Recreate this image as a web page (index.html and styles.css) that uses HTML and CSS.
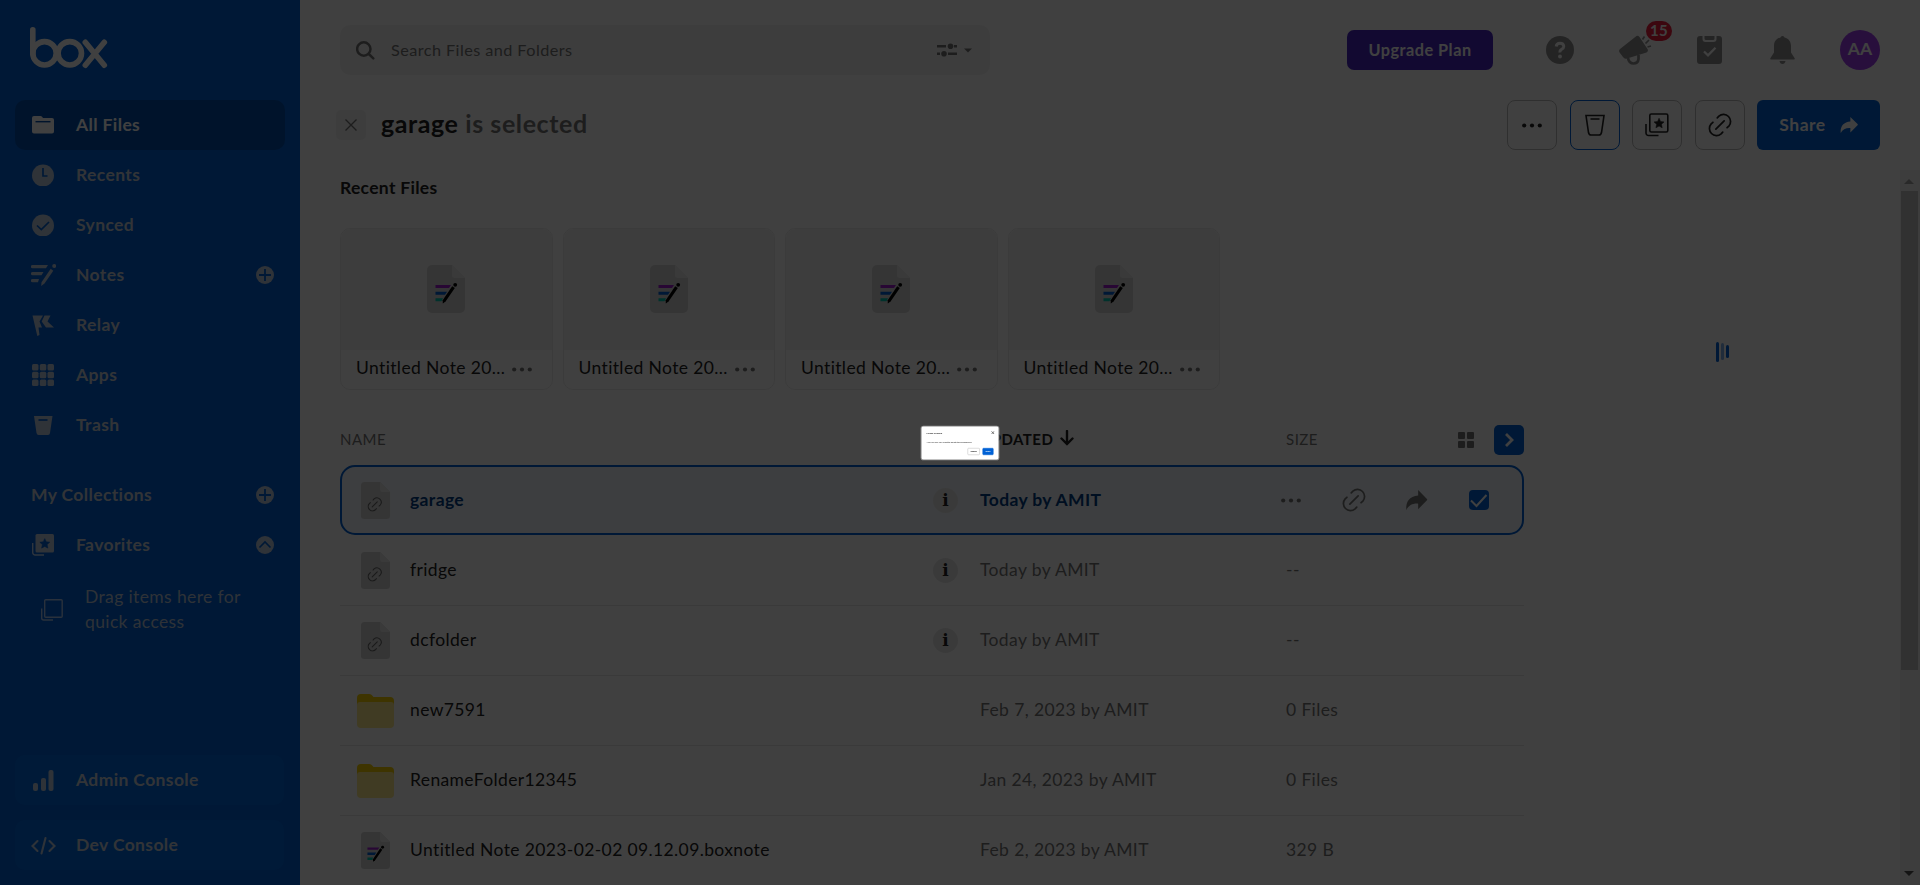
FILE: index.html
```html
<!DOCTYPE html>
<html lang="en">
<head>
<meta charset="utf-8">
<title>All Files | Box</title>
<link rel="stylesheet" href="styles.css">
</head>
<body>
<svg class="defs" width="0" height="0">
  <symbol id="dots" viewBox="0 0 20 5"><circle cx="2.2" cy="2.5" r="2.1"/><circle cx="10" cy="2.5" r="2.1"/><circle cx="17.8" cy="2.5" r="2.1"/></symbol>
  <symbol id="link" viewBox="0 0 22 22"><g fill="none" stroke="currentColor" stroke-width="1.6" stroke-linecap="round"><path d="M8.500 4.500 10 2.900A6.450 6.450 0 0 1 19.100 12L17.500 13.500M4.500 8.500 2.900 10A6.450 6.450 0 0 0 12 19.100L13.500 17.500M7.200 14.800 14.800 7.200"/></g></symbol>
  <symbol id="share" viewBox="0 0 20 20"><path d="M11.500 1 19.500 9a1 1 0 0 1 0 1.300L11.500 18.300V13.300C6.500 13 3 14.800.800 19 0 12 3.500 6.500 11.500 6Z"/></symbol>
  <symbol id="plus" viewBox="0 0 18 18"><circle cx="9" cy="9" r="9"/><path d="M9 3v12M3 9h12" stroke="#0061d5" stroke-width="1.8"/></symbol>
  <symbol id="doc" viewBox="0 0 38 48"><path d="M5 0H25L38 13V43a5 5 0 0 1-5 5H5a5 5 0 0 1-5-5V5A5 5 0 0 1 5 0Z" fill="#d3d3d3"/><path d="M25 0 38 13H28a3 3 0 0 1-3-3Z" fill="#e8e8e8"/></symbol>
  <symbol id="note" viewBox="0 0 38 48"><use href="#doc"/><path d="M8.500 20H24l-2 3H8.500Z" fill="#9f1fcf"/><path d="M8.500 26.700H20l-2 3H8.500Z" fill="#0061d5"/><path d="M8.500 33.200H16l-1.500 3H8.500Z" fill="#00c5b0"/><path d="M25.200 21.200 27.800 23 18.500 36.500 15.800 38.500 15.700 35.200Z"/><circle cx="28.200" cy="19.800" r="1.900"/></symbol>
  <symbol id="weblink" viewBox="0 0 38 48"><use href="#doc"/><use href="#link" x="8.500" y="19.500" width="19" height="19"/></symbol>
  <symbol id="folder" viewBox="0 0 37 34"><path d="M4 0H12C14 0 15 1 16.500 3H33a4 4 0 0 1 4 4V15H0V4A4 4 0 0 1 4 0Z" fill="#f5d000"/><path d="M3 8H34a3 3 0 0 1 3 3V30a4 4 0 0 1-4 4H4a4 4 0 0 1-4-4V11A3 3 0 0 1 3 8Z" fill="#ffe98a"/></symbol>
  <symbol id="star" viewBox="0 0 10 10"><path d="M5 .2 6.400 3.300 9.800 3.700 7.300 6 8 9.400 5 7.700 2 9.400 2.700 6 .2 3.700 3.600 3.300Z" stroke="currentColor" stroke-width=".5" stroke-linejoin="round"/></symbol>
</svg>

<div class="app">
  <aside class="sidebar">
    <svg class="logo" viewBox="30 27 78 42"><g fill="none" stroke="#fff" stroke-width="5.600" stroke-linecap="round"><path d="M32.800 29.800V53.300"/><circle cx="44.500" cy="53.300" r="11.700"/><circle cx="69.800" cy="53.300" r="11.700"/><path d="M85.300 42.300 104.300 65.200M104.300 42.300 85.300 65.200"/></g></svg>
    <nav class="nav">
      <a class="item active"><svg class="ico" viewBox="0 0 22 22"><path d="M2 2H8.500Q10 2 11 4H20a2 2 0 0 1 2 2V17.500a2 2 0 0 1-2 2H2a2 2 0 0 1-2-2V4A2 2 0 0 1 2 2Z"/><path d="M3.500 7.700H18.500" stroke="#004eac" stroke-width="1.400"/></svg><span class="label">All Files</span></a>
      <a class="item"><svg class="ico" viewBox="0 0 22 22"><circle cx="11" cy="11.500" r="11"/><path d="M11 4V12H15.500" fill="none" stroke="#0061d5" stroke-width="1.700"/></svg><span class="label">Recents</span></a>
      <a class="item"><svg class="ico" viewBox="0 0 22 22"><circle cx="11" cy="11.500" r="11"/><path d="M5 11.500 9.300 15.500 17 8" fill="none" stroke="#0061d5" stroke-width="1.700"/></svg><span class="label">Synced</span></a>
      <a class="item"><svg class="ico wide" viewBox="0 0 25 22"><path d="M1.500 1H17L15 4.300H1.500a1.600 1.600 0 0 1 0-3.300ZM1.500 8H12.500L10.500 11.200H1.500a1.600 1.600 0 0 1 0-3.200ZM1.500 15H8L7 18.300H1.500a1.600 1.600 0 0 1 0-3.300ZM19.700 4.800 22.300 6.800 13.500 19.500 10.200 22 10.500 18.200Z"/><circle cx="23.200" cy="2" r="2"/></svg><span class="label">Notes</span><svg class="end"><use href="#plus"/></svg></a>
      <a class="item"><svg class="ico" viewBox="0 0 22 22"><path d="M.500 1.500H11L7.500 7.500 10 13.500H6.500L7.500 21 5.300 22Z"/><path d="M12.500 1.500H18.500L15.500 7.500 22 13.500H14L9.700 7.500Z"/></svg><span class="label">Relay</span></a>
      <a class="item"><svg class="ico" viewBox="0 0 22 22"><g><rect width="6.500" height="6.500" rx="1.500"/><rect x="7.800" width="6.500" height="6.500" rx="1.500"/><rect x="15.500" width="6.500" height="6.500" rx="1.500"/><rect y="7.800" width="6.500" height="6.500" rx="1.500"/><rect x="7.800" y="7.800" width="6.500" height="6.500" rx="1.500"/><rect x="15.500" y="7.800" width="6.500" height="6.500" rx="1.500"/><rect y="15.500" width="6.500" height="6.500" rx="1.500"/><rect x="7.800" y="15.500" width="6.500" height="6.500" rx="1.500"/><rect x="15.500" y="15.500" width="6.500" height="6.500" rx="1.500"/></g></svg><span class="label">Apps</span></a>
      <a class="item"><svg class="ico" viewBox="0 0 22 22"><path d="M2 2H20.500L18 19Q17.800 21 16 21H6.500Q5 21 4.500 19Z"/><path d="M6.500 6H15.500" stroke="#0061d5" stroke-width="1.700"/></svg><span class="label">Trash</span></a>
    </nav>
    <div class="collections">
      <div class="item heading"><span class="label">My Collections</span><svg class="end"><use href="#plus"/></svg></div>
      <div class="item"><svg class="ico" viewBox="0 0 22 22"><rect x="3.500" width="18.500" height="18.500" rx="1.500"/><path d="M.700 9V18.500a2.500 2.500 0 0 0 2.500 2.500H12" fill="none" stroke="#bcd3f2" stroke-width="1.400"/><use href="#star" x="7.500" y="4.300" width="10.500" height="10.500" class="bluestar"/></svg><span class="label">Favorites</span><svg class="end" viewBox="0 0 18 18"><circle cx="9" cy="9" r="9"/><path d="M3.500 11.500 9 6 14.500 11.500" fill="none" stroke="#0061d5" stroke-width="1.600"/></svg></div>
      <div class="drag"><svg class="ico" viewBox="0 0 22 22"><g fill="none" stroke="#a6c4ed" stroke-width="1.400"><rect x="3.700" y=".700" width="17.500" height="17.500" rx="1"/><path d="M.700 9.500V19a2 2 0 0 0 2 2H12"/></g></svg><span>Drag items here for<br>quick access</span></div>
    </div>
    <div class="consoles">
      <a class="item box"><svg class="ico" viewBox="0 0 22 22"><rect x="1" y="14" width="5" height="8" rx="2"/><rect x="9" y="9" width="5" height="13" rx="2"/><rect x="16.500" y="1" width="5" height="21" rx="2"/></svg><span class="label">Admin Console</span></a>
      <a class="item box"><svg class="ico wide" viewBox="0 0 25 22"><g fill="none" stroke="#bcc9dd" stroke-width="2.100" stroke-linecap="round"><path d="M6.500 7 1.500 12 6.500 17M18.500 7 23.500 12 18.500 17M14.500 4 10.500 19.500"/></g></svg><span class="label">Dev Console</span></a>
    </div>
  </aside>

  <main class="main">
    <header class="topbar">
      <div class="search">
        <svg class="glass" viewBox="0 0 19 19"><g fill="none" stroke="#767676" stroke-width="2.500" stroke-linecap="round"><circle cx="7.800" cy="8" r="6.700"/><path d="M12.800 13 17.300 17.300"/></g></svg>
        <span class="label">Search Files and Folders</span>
        <svg class="sliders" viewBox="0 0 35 14"><path d="M0 3.200H9M17 3.200H20M0 10.800H3M11 10.800H20" stroke="#767676" stroke-width="2.600"/><circle cx="13.500" cy="3.200" r="2.800"/><circle cx="7" cy="10.800" r="2.800"/><path d="M27 5.500H35L31 9.500Z"/></svg>
      </div>
      <button class="upgrade">Upgrade Plan</button>
      <div class="tools">
        <svg class="t28" viewBox="0 0 28 28"><circle cx="14" cy="14" r="14"/><path d="M10.200 10.500Q10.500 7.200 14 7.200T17.800 10.300Q17.800 12 15.700 13.300T14 16.500" fill="none" stroke="#fff" stroke-width="2.900"/><circle cx="14" cy="20.500" r="1.900" fill="#fff"/></svg>
        <span class="mega"><svg viewBox="0 0 34 30"><path d="M17.500 1Q19 0 20.500 2L28.500 14Q29.800 16.500 27.500 17.500L8 23.500Q5.500 24.300 4 22L.600 17.500Q-.600 15.500 1 14Z"/><path d="M9 23Q10 28.500 14.500 28.500T19.500 24V20" fill="none" stroke="#909090" stroke-width="2.700"/><path d="M23.500 4.500 25.500 1.500M26.500 8.500 30 5M28.500 12 32 11" stroke="#909090" stroke-width="1.700"/></svg><b class="badge">15</b></span>
        <svg class="clip" viewBox="0 0 25 28"><path d="M3 0H5.500V3a3 3 0 0 0 3 3H16.500a3 3 0 0 0 3-3V0H22a3 3 0 0 1 3 3V25a3 3 0 0 1-3 3H3a3 3 0 0 1-3-3V3A3 3 0 0 1 3 0ZM7.500 0H17.500V2.500A1.500 1.500 0 0 1 16 4H9A1.500 1.500 0 0 1 7.500 2.500Z"/><path d="M7 15.500 11 19.300 18.500 11.700" fill="none" stroke="#fff" stroke-width="2.300"/></svg>
        <svg class="bell" viewBox="0 0 25 28"><path d="M12.500 0a2 2 0 0 1 2 1.500C19 2.500 21 6 21 10V16.500L24.500 22a.9.900 0 0 1-.7 1.500H1.200A.9.900 0 0 1 .5 22L4 16.500V10C4 6 6 2.500 10.500 1.500a2 2 0 0 1 2-1.500ZM9.500 25H15.500Q15 28 12.500 28T9.500 25Z"/></svg>
        <span class="avatar">AA</span>
      </div>
    </header>

    <div class="selection">
      <span class="close"><svg viewBox="0 0 12 12"><path d="M.500.500 11.500 11.500M11.500.500.500 11.500" stroke="#767676" stroke-width="1.400"/></svg></span>
      <h1>garage <span>is selected</span></h1>
      <div class="actions">
        <span class="btn"><svg class="d"><use href="#dots"/></svg></span>
        <span class="btn focus"><svg viewBox="0 0 22 22"><path d="M2 1.500H20L17.500 18.500Q17 21 15 21H7Q5 21 4.500 18.500ZM6.500 5H15.500" fill="none" stroke="#222" stroke-width="1.600"/></svg></span>
        <span class="btn"><svg viewBox="0 0 22 22"><g fill="none" stroke="#222" stroke-width="1.600"><rect x="3.800" y="0" width="18" height="18" rx="1.500"/><path d="M0 10V19a2.500 2.500 0 0 0 2.500 2.500H12.500"/></g><use href="#star" x="7.800" y="4" width="10.500" height="10.500"/></svg></span>
        <span class="btn"><svg class="l"><use href="#link"/></svg></span>
        <button class="sharebtn"><span class="label">Share</span><svg><use href="#share"/></svg></button>
      </div>
    </div>

    <div class="body">
      <section class="content">
        <h2>Recent Files</h2>
        <div class="cards">
          <div class="card"><div class="preview"><svg><use href="#note"/></svg></div><div class="cap">Untitled Note 20...<svg><use href="#dots"/></svg></div></div>
          <div class="card"><div class="preview"><svg><use href="#note"/></svg></div><div class="cap">Untitled Note 20...<svg><use href="#dots"/></svg></div></div>
          <div class="card"><div class="preview"><svg><use href="#note"/></svg></div><div class="cap">Untitled Note 20...<svg><use href="#dots"/></svg></div></div>
          <div class="card"><div class="preview"><svg><use href="#note"/></svg></div><div class="cap">Untitled Note 20...<svg><use href="#dots"/></svg></div></div>
        </div>
        <div class="thead">
          <span class="c-name">NAME</span>
          <span class="c-date sorted">UPDATED<svg viewBox="0 0 14 16"><path d="M7 1V14M1.500 8.500 7 14 12.500 8.500" fill="none" stroke="#222" stroke-width="2.400" stroke-linecap="round"/></svg></span>
          <span class="c-size">SIZE</span>
          <svg class="grid" viewBox="0 0 16 16"><rect width="7" height="7" rx="1"/><rect x="9" width="7" height="7" rx="1"/><rect y="9" width="7" height="7" rx="1"/><rect x="9" y="9" width="7" height="7" rx="1"/></svg>
          <span class="expand"><svg viewBox="0 0 10 16"><path d="M2 2 8 8 2 14" fill="none" stroke="#fff" stroke-width="2.800"/></svg></span>
        </div>
        <div class="row selected"><span class="fi"><svg class="file"><use href="#weblink"/></svg></span><span class="c-name">garage</span><i class="info">i</i><span class="c-date">Today by AMIT</span><span class="rowtools"><svg class="rd"><use href="#dots"/></svg><svg class="rl"><use href="#link"/></svg><svg class="rs"><use href="#share"/></svg><span class="check"><svg viewBox="0 0 20 20"><path d="M2 10.500 7.500 16 17.500 5" fill="none" stroke="#fff" stroke-width="2"/></svg></span></span></div>
        <div class="row first"><span class="fi"><svg class="file"><use href="#weblink"/></svg></span><span class="c-name">fridge</span><i class="info">i</i><span class="c-date">Today by AMIT</span><span class="c-size">--</span></div>
        <div class="row"><span class="fi"><svg class="file"><use href="#weblink"/></svg></span><span class="c-name">dcfolder</span><i class="info">i</i><span class="c-date">Today by AMIT</span><span class="c-size">--</span></div>
        <div class="row"><span class="fi"><svg class="fold"><use href="#folder"/></svg></span><span class="c-name">new7591</span><span class="c-date">Feb 7, 2023 by AMIT</span><span class="c-size">0 Files</span></div>
        <div class="row"><span class="fi"><svg class="fold"><use href="#folder"/></svg></span><span class="c-name">RenameFolder12345</span><span class="c-date">Jan 24, 2023 by AMIT</span><span class="c-size">0 Files</span></div>
        <div class="row"><span class="fi"><svg class="file"><use href="#note"/></svg></span><span class="c-name">Untitled Note 2023-02-02 09.12.09.boxnote</span><span class="c-date">Feb 2, 2023 by AMIT</span><span class="c-size">329 B</span></div>
      </section>
      <aside class="details"><div class="loader"><i></i><i></i><i></i></div></aside>
      <div class="scroll"><svg viewBox="0 0 10 5"><path d="M0 5H10L5 0Z" fill="#a3a3a3"/></svg><div class="thumb"></div><svg viewBox="0 0 10 5"><path d="M0 0H10L5 5Z" fill="#505050"/></svg></div>
    </div>
  </main>
</div>

<div class="overlay">
  <div class="dialog">
    <div class="dhead"><b>Please Confirm</b><svg viewBox="0 0 12 12"><path d="M1 1 11 11M11 1 1 11" stroke="#555" stroke-width="3"/></svg></div>
    <p>Are you sure you want to delete this bookmark?</p>
    <div class="dbtns"><button>Cancel</button><button class="primary">Okay</button></div>
  </div>
</div>
</body>
</html>
```
FILE: styles.css
```css
* { box-sizing: border-box; }
body { margin: 0; font-family: Lato, "Liberation Sans", sans-serif; font-size: 17.5px; letter-spacing: .375px; color: #222; background: #fff; overflow: hidden; }
button { font: inherit; letter-spacing: inherit; border: 0; padding: 0; }
svg { display: block; flex: none; }
.defs { position: absolute; }
.app { display: flex; width: 1920px; height: 885px; }
.label { padding-bottom: 2px; }

/* Sidebar */
.sidebar { width: 300px; background: #0061d5; display: flex; flex-direction: column; padding: 27px 15px 15px; color: #bfd7f5; fill: #bcc9dd; font-weight: 700; }
.logo { width: 78px; height: 42px; margin: 0 0 31px 15px; }
.item { height: 50px; display: flex; align-items: center; padding: 0 11px 0 17px; border-radius: 10px; color: #c8d0db; }
.ico { width: 22px; height: 22px; margin-right: 22px; }
.ico.wide { width: 25px; margin: 0 20px 0 -1px; }
.item.active { background: #004eac; color: #fff; fill: #fff; }
.end { width: 18px; height: 18px; margin-left: auto; }
.collections { margin-top: 20px; }
.heading { padding-left: 16px; }
.bluestar { fill: #0061d5; color: #0061d5; }
.drag { display: flex; align-items: center; padding: 14px 0 0 26px; font-weight: 400; line-height: 25px; color: #b8c6dc; }
.drag .ico { margin-top: 2px; }
.consoles { margin-top: auto; display: flex; flex-direction: column; gap: 15px; }
.box { background: #006ae0; width: 269px; }

/* Header */
.main { width: 1620px; display: flex; flex-direction: column; }
.topbar { display: flex; align-items: center; height: 50px; margin: 25px 40px 25px; }
.search { width: 650px; height: 50px; border-radius: 10px; background: #f4f4f4; color: #767676; fill: #767676; display: flex; align-items: center; padding: 0 18px 0 16px; font-size: 16.250px; letter-spacing: .43px; }
.glass { width: 19px; height: 19px; margin-right: 16px; }
.sliders { width: 35px; height: 14px; margin-left: auto; }
.upgrade { margin-left: auto; width: 146px; height: 40px; padding-bottom: 2px; border-radius: 7px; background: #4826c2; color: #fff; font-size: 16.250px; font-weight: 700; letter-spacing: .5px; }
.tools { display: flex; align-items: center; fill: #909090; margin-left: 53px; }
.t28 { width: 28px; height: 28px; }
.mega { position: relative; margin-left: 45px; }
.mega svg { width: 34px; height: 30px; }
.badge { position: absolute; left: 27px; top: -14px; width: 26px; height: 20px; border-radius: 10px; background: #ed1c3c; color: #fff; font-size: 15px; line-height: 19px; text-align: center; }
.clip { width: 25px; height: 28px; margin-left: 44px; }
.bell { width: 25px; height: 28px; margin-left: 48px; }
.avatar { margin-left: 45px; width: 40px; height: 40px; border-radius: 50%; background: #9f3fed; color: #fff; font-weight: 700; letter-spacing: 0; line-height: 38px; text-align: center; }

/* Selection toolbar */
.selection { height: 50px; display: flex; align-items: center; margin: 0 40px 20px 36px; }
.close { width: 30px; height: 30px; background: #f4f4f4; border-radius: 5px; display: grid; place-items: center; }
.close svg { width: 12px; height: 12px; }
h1 { margin: 0 0 5px 15px; font-size: 25px; font-weight: 700; letter-spacing: .58px; }
h1 span { color: #767676; }
.actions { margin-left: auto; display: flex; gap: 12.500px; }
.btn { width: 50px; height: 50px; border: 1px solid #bcbcbc; border-radius: 8px; display: grid; place-items: center; fill: #222; color: #222; }
.btn.focus { border-color: #0061d5; }
.btn svg { width: 22px; height: 22px; overflow: visible; }
.btn .l { width: 24px; height: 24px; }
.btn .d { width: 20px; height: 5px; }
.sharebtn { width: 123px; height: 50px; border-radius: 6px; background: #0061d5; color: #fff; fill: #fff; font-weight: 700; display: flex; align-items: center; justify-content: center; gap: 14px; letter-spacing: .5px; }
.sharebtn svg { width: 18px; height: 18px; }

/* File list */
.body { display: flex; flex: 1; min-height: 0; }
.content { width: 1184px; margin-left: 40px; overflow: hidden; }
h2 { margin: 7px 0 29px; font-size: 17.500px; line-height: 22px; font-weight: 700; letter-spacing: .3px; }
.cards { display: flex; gap: 10px; }
.card { width: 212.500px; height: 162px; border: 1px solid #ececec; border-radius: 10px; overflow: hidden; }
.preview { height: 121px; background: #f4f4f4; display: grid; place-items: center; }
.preview svg { width: 38px; height: 48px; margin-top: -1px; }
.cap { height: 35px; display: flex; align-items: center; padding-left: 15px; }
.cap svg { width: 20px; height: 5px; margin: 4px 0 0 7px; fill: #767676; }
.thead { display: flex; align-items: center; height: 30px; margin: 35px 0 10px; font-size: 15px; color: #767676; letter-spacing: .5px; }
.c-name { width: 592px; }
.thead .c-name { width: 640px; }
.thead .c-name, .thead .c-size, .sorted, .row .c-name, .row .c-date, .row .c-size { padding-bottom: 2px; }
.c-date { width: 306px; color: #767676; }
.c-size { color: #767676; }
.sorted { color: #222; font-weight: 700; display: flex; gap: 7px; }
.sorted svg { width: 14px; height: 16px; }
.thead .c-size { width: 172px; }
.grid { width: 16px; height: 16px; fill: #767676; }
.expand { width: 30px; height: 30px; margin-left: auto; border-radius: 5px; background: #0061d5; display: grid; place-items: center; }
.expand svg { width: 10px; height: 16px; }
.row { height: 70px; display: flex; align-items: center; border-top: 1px solid #e8e8e8; }
.row.first { border-top-color: transparent; }
.row .c-name { width: 523px; }
.row .c-name:not(:has(+ .info)) { width: 570px; }
.fi { width: 70px; padding-left: 17px; }
.file { width: 37px; height: 37px; fill: #000; color: #666; }
.fold { width: 37px; height: 34px; }
.info { width: 25px; height: 25px; border-radius: 50%; background: #e8e8e8; margin-right: 22px; font: 700 17px/25px "DejaVu Serif", serif; letter-spacing: 0; text-align: center; }
.row.selected { border: 2px solid #0061d5; border-radius: 15px; background: #f2f7fd; font-weight: 700; }
.selected .fi { width: 68px; padding-left: 15px; }
.selected .c-name, .selected .c-date { color: #003c84; }
.selected .c-date { width: 301px; }
.rowtools { display: flex; align-items: center; fill: #767676; color: #767676; }
.rd { width: 20px; height: 5px; }
.rl { width: 24px; height: 24px; margin-left: 41px; }
.rs { width: 23px; height: 22px; margin-left: 39px; }
.check { width: 20px; height: 20px; margin-left: 41px; border-radius: 4px; background: #0061d5; }

/* Details pane and scrollbar */
.details { flex: 1; }
.loader { display: flex; align-items: center; gap: 2px; height: 21px; margin: 171px 0 0 192px; }
.loader i { width: 3px; height: 20px; border-radius: 2px; background: #0061d5; }
.loader i:nth-child(2) { height: 17px; opacity: .5; }
.loader i:nth-child(3) { height: 13px; }
.scroll { width: 20px; background: #f1f1f1; display: flex; flex-direction: column; align-items: center; padding: 9px 2px 9px 0; }
.scroll svg { width: 10px; height: 5px; }
.scroll svg:last-child { margin-top: auto; }
.thumb { width: 17px; height: 479px; margin-top: 7px; background: #c1c1c1; }

/* Modal, opening from a small scale */
.overlay { position: fixed; inset: 0; background: rgba(0, 0, 0, .75); display: grid; place-items: center; }
.dialog { width: 462px; height: 198px; padding: 33px 30px 0; background: #fff; border-radius: 12px; box-shadow: 0 0 0 5px #999; transform: scale(.1667); font-size: 14px; line-height: 18px; letter-spacing: 0; color: #222; }
.dhead { display: flex; justify-content: space-between; height: 18px; }
.dhead svg { width: 20px; height: 20px; margin: -6px -6px 0 0; }
.dialog p { margin: 32px 0 28px; font-size: 13px; white-space: nowrap; }
.dbtns { display: flex; justify-content: flex-end; gap: 16px; }
.dbtns button { width: 74px; height: 42px; border: 3px solid #bcbcbc; border-radius: 6px; background: #fff; font-size: 13px; font-weight: 700; }
.dbtns .primary { width: 66px; background: #0061d5; border-color: #0061d5; color: #fff; }
```
